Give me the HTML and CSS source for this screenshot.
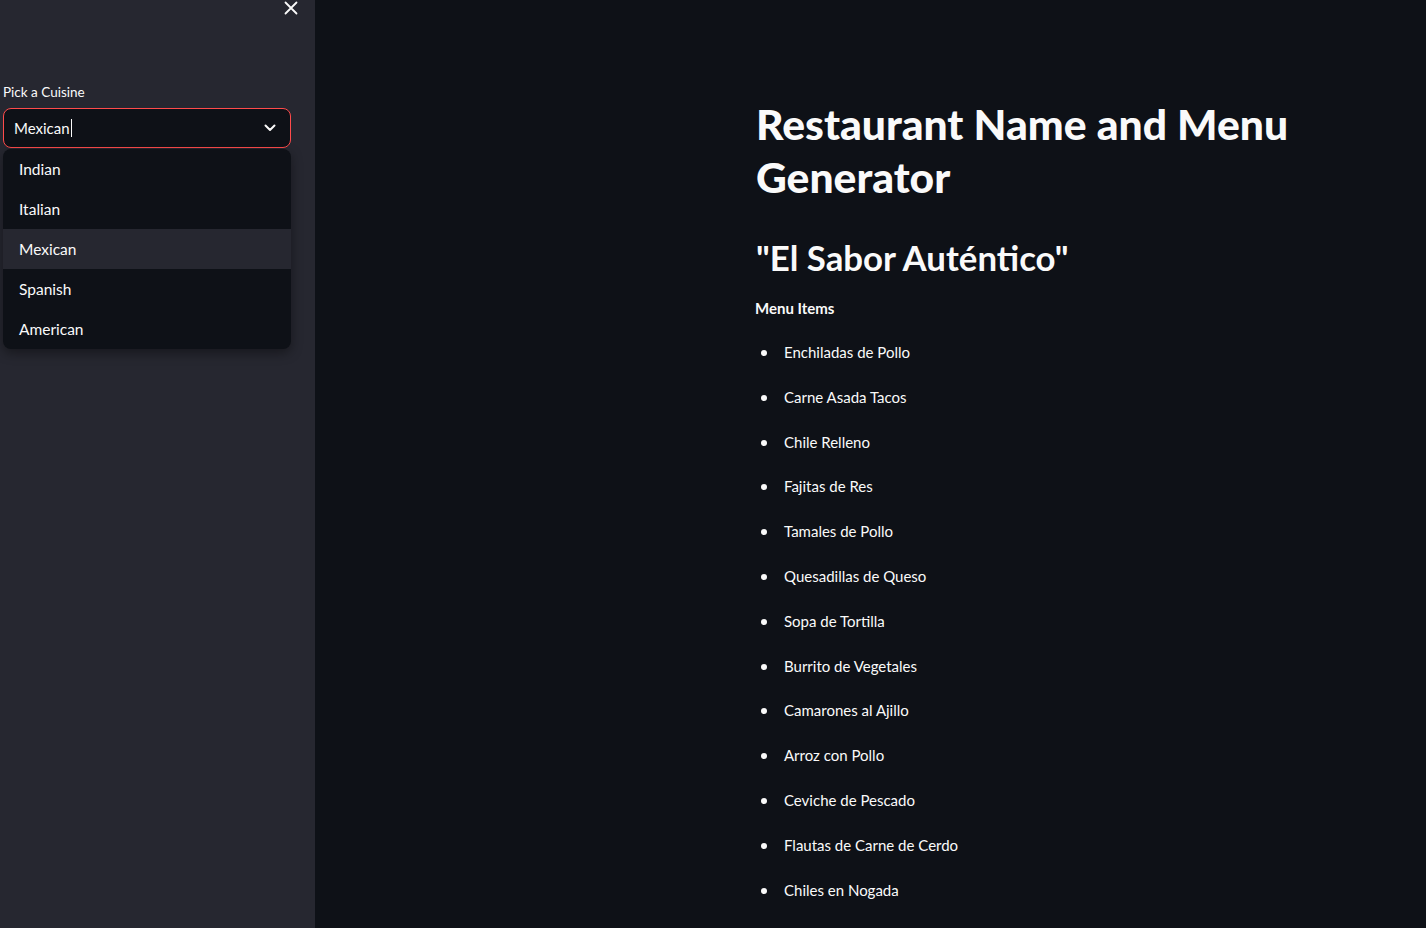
FILE: index.html
```html
<!DOCTYPE html>
<html lang="en">
<head>
<meta charset="utf-8">
<title>Restaurant Name and Menu Generator</title>
<link rel="stylesheet" href="styles.css">
</head>
<body>
<div class="app">
  <aside class="sidebar">
    <div class="sidebar-top">
      <button class="close" aria-label="Close sidebar">
        <svg width="14" height="14" viewBox="0 0 14 14"><path d="M1.5 1.5 L12.5 12.5 M12.5 1.5 L1.5 12.5" stroke="#fafafa" stroke-width="1.8" stroke-linecap="round"/></svg>
      </button>
    </div>
    <div class="field">
      <label class="label">Pick a Cuisine</label>
      <div class="select">
        <span class="select-value">Mexican<span class="caret"></span></span>
        <svg class="chevron" width="12" height="8" viewBox="0 0 12 8"><path d="M1.5 1.5 L6 6 L10.5 1.5" fill="none" stroke="#fafafa" stroke-width="2" stroke-linecap="round" stroke-linejoin="round"/></svg>
      </div>
      <ul class="menu">
        <li class="option">Indian</li>
        <li class="option">Italian</li>
        <li class="option active">Mexican</li>
        <li class="option">Spanish</li>
        <li class="option">American</li>
      </ul>
    </div>
  </aside>
  <main class="main">
    <div class="content">
      <h1 class="title">Restaurant Name and Menu Generator</h1>
      <h2 class="name">"El Sabor Auténtico"</h2>
      <p class="section">Menu Items</p>
      <ul class="items">
        <li>Enchiladas de Pollo</li>
        <li>Carne Asada Tacos</li>
        <li>Chile Relleno</li>
        <li>Fajitas de Res</li>
        <li>Tamales de Pollo</li>
        <li>Quesadillas de Queso</li>
        <li>Sopa de Tortilla</li>
        <li>Burrito de Vegetales</li>
        <li>Camarones al Ajillo</li>
        <li>Arroz con Pollo</li>
        <li>Ceviche de Pescado</li>
        <li>Flautas de Carne de Cerdo</li>
        <li>Chiles en Nogada</li>
      </ul>
    </div>
  </main>
</div>
</body>
</html>
```
FILE: styles.css
```css
* { box-sizing: border-box; }
html, body { margin: 0; padding: 0; height: 100%; }
body {
  font-family: Lato, "Noto Sans", sans-serif;
  color: #fafafa;
  background: #0e1117;
  overflow: hidden;
}
.app { display: flex; height: 928px; }
.sidebar {
  width: 315px;
  flex: none;
  background: #262730;
  padding: 0 17px 0 3px;
  display: flex;
  flex-direction: column;
}
.sidebar-top { display: flex; justify-content: flex-end; height: 80px; padding-right: 0; }
.close {
  background: none; border: 0; padding: 0;
  width: 14px; height: 14px; margin: 1px 0 0 0;
  display: flex; cursor: pointer;
}
.field { display: flex; flex-direction: column; width: 288px; }
.label { font-size: 13.5px; line-height: 24px; margin-bottom: 4px; }
.select {
  height: 40px;
  border: 1px solid #ff4b4b;
  border-radius: 8px;
  background: #0e1117;
  display: flex; align-items: center; justify-content: space-between;
  padding: 0 14px 0 10px;
}
.select-value { font-size: 15px; display: flex; align-items: center; }
.caret { width: 1px; height: 18px; background: #fafafa; margin-left: 1px; }
.menu {
  list-style: none; margin: 1px 0 0 0; padding: 0;
  background: #0e1117;
  border-radius: 8px;
  overflow: hidden;
  box-shadow: 0 4px 12px rgba(0,0,0,0.4);
}
.option { height: 40px; display: flex; align-items: center; padding-left: 16px; font-size: 15.5px; }
.option.active { background: #262730; }
.main { flex: 1; padding-left: 441px; }
.content { width: 650px; }
.title {
  font-size: 42.6px; font-weight: 900; line-height: 53px;
  margin: 97px 0 0 0; letter-spacing: 0;
}
.name { font-size: 34.8px; font-weight: 700; line-height: 44px; margin: 33px 0 0 0; }
.section { font-size: 15px; font-weight: 700; line-height: 24px; margin: 16px 0 0 -1px; }
.items { list-style: none; margin: 10px 0 0 0; padding-left: 28px; font-size: 15px; }
.items li { line-height: 44.8px; position: relative; }
.items li::before {
  content: ""; position: absolute; left: -23px; top: 20px;
  width: 6px; height: 6px; border-radius: 50%; background: #fafafa;
}
```
